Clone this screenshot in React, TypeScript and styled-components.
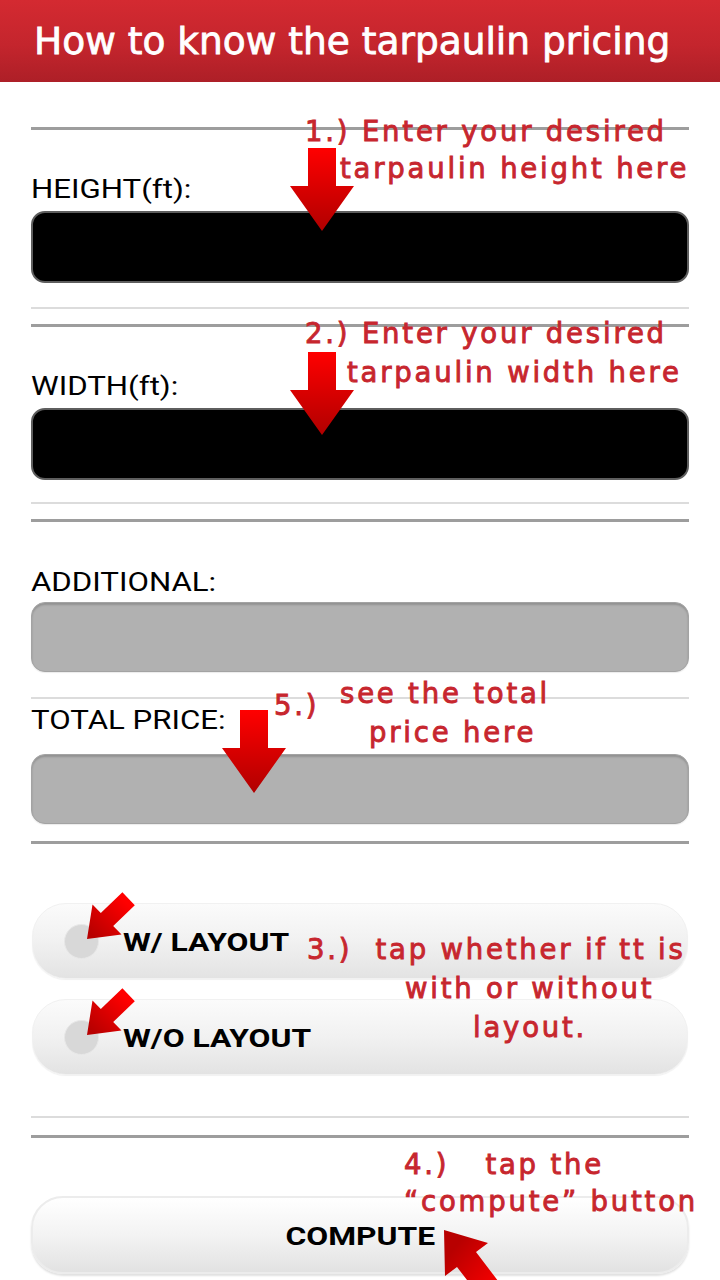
import React from 'react'
import styled, { createGlobalStyle } from 'styled-components'

const GlobalStyle = createGlobalStyle`
  html, body {
    margin: 0;
    padding: 0;
    background: #ffffff;
  }
  * {
    box-sizing: border-box;
  }
`

const SPage = styled.div`
  position: relative;
  width: 720px;
  height: 1280px;
  overflow: hidden;
  background: #ffffff;
  font-family: Roboto, "Noto Sans", sans-serif;
`

const SHeader = styled.div`
  height: 82px;
  background: linear-gradient(180deg, #d42a31 0%, #c4252d 55%, #ad1f27 100%);
  padding-left: 34px;
`

const STitle = styled.h1`
  margin: 0;
  font-family: "DejaVu Sans", Verdana, sans-serif;
  font-weight: normal;
  font-size: 37.5px;
  line-height: 82px;
  color: #ffffff;
  -webkit-text-stroke: 0.8px #ffffff;
  white-space: nowrap;
`

const SBody = styled.div`
  display: flex;
  flex-direction: column;
  padding: 0 31px;
`

const SRule = styled.div<{ $tone: 'dark' | 'light'; $gap: number }>`
  height: ${(p) => (p.$tone === 'dark' ? 3 : 2)}px;
  margin-top: ${(p) => p.$gap}px;
  background: ${(p) => (p.$tone === 'dark' ? '#9d9d9d' : '#dcdcdc')};
`

const SLabel = styled.div<{ $gap: number }>`
  height: 30px;
  margin-top: ${(p) => p.$gap}px;
  font-size: 26px;
  line-height: 30px;
  color: #000000;
  white-space: nowrap;

  span {
    display: inline-block;
    transform: scaleX(1.2);
    transform-origin: left center;
  }
`

const SField = styled.input<{ $variant: 'entry' | 'result'; $gap: number; $height: number }>`
  display: block;
  width: 100%;
  height: ${(p) => p.$height}px;
  margin: ${(p) => p.$gap}px 0 0 0;
  padding: 0 16px;
  border-radius: 14px;
  outline: none;
  appearance: none;
  font-size: 26px;
  ${(p) =>
    p.$variant === 'entry'
      ? `
    background: #000000;
    border: 2px solid #5e5e5e;
    color: #ffffff;
  `
      : `
    background: #b1b1b1;
    border: 1px solid #a3a3a3;
    box-shadow: inset 0 2px 2px rgba(0, 0, 0, 0.18), 0 1px 1px rgba(0, 0, 0, 0.08);
    color: #000000;
  `}
`

const SRadioButton = styled.label<{ $gap: number }>`
  display: flex;
  align-items: center;
  height: 76px;
  margin: ${(p) => p.$gap}px 1px 0 1px;
  padding-left: 31px;
  border-radius: 34px;
  border: 1px solid #f1f1f1;
  background: linear-gradient(180deg, #fbfbfb 0%, #f1f1f1 50%, #e3e3e3 100%);
  box-shadow: 0 1px 1px rgba(0, 0, 0, 0.06);
`

const SRadioDot = styled.span`
  width: 35px;
  height: 35px;
  border-radius: 50%;
  background: #d8d8d8;
  border: 1px solid #e8e8e8;
  flex-shrink: 0;
`

const SButtonText = styled.span`
  display: inline-block;
  font-weight: 700;
  font-size: 26.5px;
  color: #000000;
  transform: scaleX(1.2);
  transform-origin: left center;
  white-space: nowrap;
`

const SRadioText = styled(SButtonText)`
  margin-left: 24px;
`

const SComputeButton = styled.button<{ $gap: number }>`
  display: flex;
  align-items: center;
  justify-content: center;
  width: 100%;
  height: 78px;
  margin-top: ${(p) => p.$gap}px;
  padding: 0;
  border-radius: 32px;
  border: 2px solid #ececec;
  background: linear-gradient(180deg, #ffffff 0%, #f3f3f3 50%, #e2e2e2 100%);
  box-shadow: 0 2px 2px rgba(0, 0, 0, 0.12);
  font-family: Roboto, sans-serif;

  ${SButtonText} {
    transform-origin: center center;
  }
`

// red hand-written hints laid over the form
const SNote = styled.div<{ $x: number; $y: number; $lh: number }>`
  position: absolute;
  left: ${(p) => p.$x}px;
  top: ${(p) => p.$y}px;
  font-family: "DejaVu Sans", Verdana, sans-serif;
  font-size: 27.5px;
  letter-spacing: 2.8px;
  line-height: ${(p) => p.$lh}px;
  color: #c7262e;
  -webkit-text-stroke: 0.9px #c7262e;
  white-space: pre;
  pointer-events: none;
`

const SNoteLine = styled.div<{ $indent?: number }>`
  padding-left: ${(p) => p.$indent || 0}px;
`

const SNoteGap = styled.span<{ $w: number }>`
  display: inline-block;
  width: ${(p) => p.$w}px;
`

const SArrow = styled.svg<{ $x: number; $y: number }>`
  position: absolute;
  left: ${(p) => p.$x}px;
  top: ${(p) => p.$y}px;
  overflow: visible;
  pointer-events: none;
`

const DownArrow = ({ x, y, id }: { x: number; y: number; id: string }) => (
  <SArrow $x={x} $y={y} width={64} height={83} viewBox="0 0 64 83">
    <defs>
      <linearGradient id={id} x1="0" y1="0" x2="0" y2="1">
        <stop offset="0" stopColor="#ff0000" />
        <stop offset="1" stopColor="#b00000" />
      </linearGradient>
    </defs>
    <path d="M18 0 H46 V38 H64 L32 83 L0 38 H18 Z" fill={`url(#${id})`} />
  </SArrow>
)

const CornerArrow = ({ x, y, id }: { x: number; y: number; id: string }) => (
  <SArrow $x={x} $y={y} width={55} height={56} viewBox="0 0 55 56">
    <defs>
      <linearGradient id={id} x1="1" y1="0" x2="0" y2="1">
        <stop offset="0.2" stopColor="#ff0000" />
        <stop offset="0.9" stopColor="#b80000" />
      </linearGradient>
    </defs>
    <path
      d="M2 51 L36.5 46.6 L28.2 38 L49.8 17.3 L37.4 4.3 L15.8 25 L7.5 16.4 Z"
      fill={`url(#${id})`}
    />
  </SArrow>
)

const UpArrow = ({ x, y, id }: { x: number; y: number; id: string }) => (
  <SArrow $x={x} $y={y} width={70} height={82} viewBox="0 0 70 82">
    <defs>
      <linearGradient id={id} x1="0" y1="0" x2="1" y2="1">
        <stop offset="0.2" stopColor="#b80000" />
        <stop offset="0.85" stopColor="#ff0000" />
      </linearGradient>
    </defs>
    <path
      d="M4 4 L48 17 L36 26 L66.3 65.8 L47.3 80.3 L17 41 L5 50 Z"
      fill={`url(#${id})`}
    />
  </SArrow>
)

const App = () => {
  return (
    <SPage>
      <GlobalStyle />
      <SHeader>
        <STitle>How to know the tarpaulin pricing</STitle>
      </SHeader>

      <SBody>
        <SRule $tone="dark" $gap={45} />
        <SLabel $gap={44}><span>HEIGHT(ft):</span></SLabel>
        <SField $variant="entry" $gap={7} $height={72} readOnly />
        <SRule $tone="light" $gap={24} />

        <SRule $tone="dark" $gap={15} />
        <SLabel $gap={44}><span>WIDTH(ft):</span></SLabel>
        <SField $variant="entry" $gap={7} $height={72} readOnly />
        <SRule $tone="light" $gap={22} />

        <SRule $tone="dark" $gap={15} />
        <SLabel $gap={45}><span>ADDITIONAL:</span></SLabel>
        <SField $variant="result" $gap={5} $height={70} readOnly />
        <SRule $tone="light" $gap={25} />
        <SLabel $gap={6}><span>TOTAL PRICE:</span></SLabel>
        <SField $variant="result" $gap={19} $height={70} readOnly />

        <SRule $tone="dark" $gap={17} />
        <SRadioButton $gap={59}>
          <SRadioDot />
          <SRadioText>W/ LAYOUT</SRadioText>
        </SRadioButton>
        <SRadioButton $gap={20}>
          <SRadioDot />
          <SRadioText>W/O LAYOUT</SRadioText>
        </SRadioButton>
        <SRule $tone="light" $gap={41} />

        <SRule $tone="dark" $gap={17} />
        <SComputeButton $gap={58}>
          <SButtonText>COMPUTE</SButtonText>
        </SComputeButton>
      </SBody>

      <SNote $x={305} $y={113} $lh={37}>
        <SNoteLine>1.) Enter your desired</SNoteLine>
        <SNoteLine $indent={35}>tarpaulin height here</SNoteLine>
      </SNote>
      <DownArrow x={290} y={148} id="arrow-height" />

      <SNote $x={305} $y={314} $lh={39}>
        <SNoteLine>2.) Enter your desired</SNoteLine>
        <SNoteLine $indent={42}>tarpaulin width here</SNoteLine>
      </SNote>
      <DownArrow x={290} y={352} id="arrow-width" />

      <SNote $x={274} $y={686} $lh={39}>
        <SNoteLine>5.)</SNoteLine>
      </SNote>
      <SNote $x={340} $y={674} $lh={39}>
        <SNoteLine>see the total</SNoteLine>
        <SNoteLine $indent={29}>price here</SNoteLine>
      </SNote>
      <DownArrow x={222} y={710} id="arrow-total" />

      <SNote $x={307} $y={930} $lh={39}>
        <SNoteLine>3.)  tap whether if tt is</SNoteLine>
        <SNoteLine $indent={98}>with or without</SNoteLine>
        <SNoteLine $indent={166}>layout.</SNoteLine>
      </SNote>
      <CornerArrow x={85} y={888} id="arrow-with" />
      <CornerArrow x={85} y={984} id="arrow-without" />

      <SNote $x={404} $y={1146} $lh={37}>
        <SNoteLine>4.)<SNoteGap $w={36} />tap the</SNoteLine>
        <SNoteLine $indent={-1}>“compute” button</SNoteLine>
      </SNote>
      <UpArrow x={440} y={1226} id="arrow-compute" />
    </SPage>
  )
}

export default App
